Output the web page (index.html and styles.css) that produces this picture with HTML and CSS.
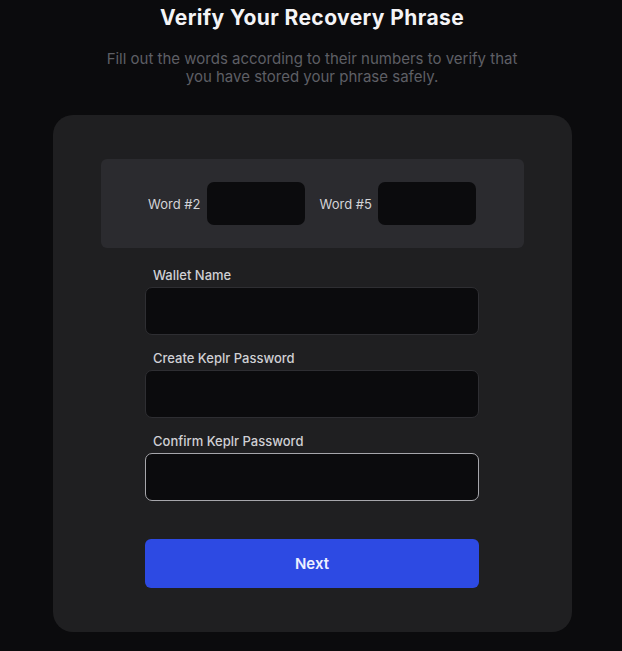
FILE: index.html
```html
<!DOCTYPE html>
<html lang="en">
<head>
  <meta charset="UTF-8" />
  <meta name="viewport" content="width=device-width, initial-scale=1.0" />
  <title>Verify Your Recovery Phrase</title>
  <link rel="stylesheet" href="styles.css">
</head>
<body>
  <div class="page">
    <h1>Verify Your Recovery Phrase</h1>
    <p class="subtitle">Fill out the words according to their numbers to verify that<br>you have stored your phrase safely.</p>

    <form class="card">
      <div class="words">
        <label class="word">Word #2 <input type="text" /></label>
        <label class="word">Word #5 <input type="text" /></label>
      </div>

      <div class="fields">
        <label class="field-label" for="walletName">Wallet Name</label>
        <input class="field" type="text" id="walletName" />

        <label class="field-label" for="password">Create Keplr Password</label>
        <input class="field" type="password" id="password" />

        <label class="field-label" for="confirm">Confirm Keplr Password</label>
        <input class="field focused" type="password" id="confirm" />

        <button type="submit">Next</button>
      </div>
    </form>
  </div>
</body>
</html>
```

FILE: styles.css
```css
body {
  background-color: #0b0b0d;
  color: #fff;
  font-family: Inter, 'Noto Sans', sans-serif;
  margin: 0;
}
.page {
  display: flex;
  flex-direction: column;
  align-items: center;
  padding: 4px 0 0 2px;
}
h1 {
  margin: 0;
  font-size: 21px;
  line-height: 28px;
  font-weight: 700;
  letter-spacing: 0.4px;
  color: #f4f4f6;
}
.subtitle {
  margin: 18px 0 0;
  font-size: 15px;
  line-height: 18px;
  color: #5e5f65;
  text-align: center;
}
.card {
  margin-top: 29px;
  width: 519px;
  box-sizing: border-box;
  background-color: #1f1f21;
  border-radius: 20px;
  padding: 44px 48px;
}
.words {
  background-color: #2b2b2f;
  border-radius: 6px;
  height: 89px;
  display: flex;
  justify-content: center;
  align-items: center;
  gap: 15px;
}
.word {
  display: flex;
  align-items: center;
  gap: 6px;
  font-size: 13px;
  color: #d4d4d8;
}
.word input {
  width: 98px;
  height: 43px;
  box-sizing: border-box;
  background-color: #0b0b0d;
  border: none;
  border-radius: 7px;
}
.fields {
  width: 334px;
  margin: 19px auto 0;
  display: flex;
  flex-direction: column;
}
.field-label {
  font-size: 13px;
  line-height: 16px;
  font-weight: 500;
  color: #d0d0d4;
  padding-left: 8px;
  margin-bottom: 4px;
}
.field {
  height: 48px;
  box-sizing: border-box;
  background-color: #0b0b0d;
  border: 1px solid #2e2e32;
  border-radius: 7px;
  margin-bottom: 15px;
  color: #fff;
}
.field.focused {
  border-color: #a6a6ab;
}
button {
  margin-top: 23px;
  height: 49px;
  background-color: #2d4ae3;
  color: #eef0ff;
  border: none;
  border-radius: 6px;
  font-family: inherit;
  font-size: 15px;
  font-weight: 600;
  cursor: pointer;
}
```
